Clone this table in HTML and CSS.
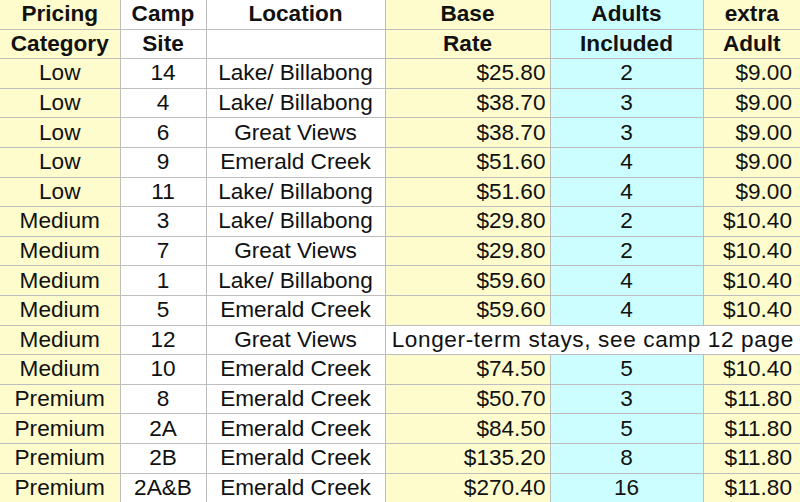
FILE: index.html
```html
<!DOCTYPE html>
<html>
<head>
<meta charset="utf-8">
<link rel="stylesheet" href="styles.css">
</head>
<body>
<table class="rates">
  <colgroup>
    <col class="c-cat"><col class="c-site"><col class="c-loc"><col class="c-base"><col class="c-adults"><col class="c-extra">
  </colgroup>
  <thead>
    <tr>
      <th class="y">Pricing</th><th class="w">Camp</th><th class="w">Location</th><th class="y">Base</th><th class="b">Adults</th><th class="y">extra</th>
    </tr>
    <tr>
      <th class="y">Category</th><th class="w">Site</th><th class="w"></th><th class="y">Rate</th><th class="b">Included</th><th class="y">Adult</th>
    </tr>
  </thead>
  <tbody>
    <tr><td class="y">Low</td><td class="w">14</td><td class="w">Lake/ Billabong</td><td class="y r">$25.80</td><td class="b">2</td><td class="y r2">$9.00</td></tr>
    <tr><td class="y">Low</td><td class="w">4</td><td class="w">Lake/ Billabong</td><td class="y r">$38.70</td><td class="b">3</td><td class="y r2">$9.00</td></tr>
    <tr><td class="y">Low</td><td class="w">6</td><td class="w">Great Views</td><td class="y r">$38.70</td><td class="b">3</td><td class="y r2">$9.00</td></tr>
    <tr><td class="y">Low</td><td class="w">9</td><td class="w">Emerald Creek</td><td class="y r">$51.60</td><td class="b">4</td><td class="y r2">$9.00</td></tr>
    <tr><td class="y">Low</td><td class="w">11</td><td class="w">Lake/ Billabong</td><td class="y r">$51.60</td><td class="b">4</td><td class="y r2">$9.00</td></tr>
    <tr><td class="y">Medium</td><td class="w">3</td><td class="w">Lake/ Billabong</td><td class="y r">$29.80</td><td class="b">2</td><td class="y r2">$10.40</td></tr>
    <tr><td class="y">Medium</td><td class="w">7</td><td class="w">Great Views</td><td class="y r">$29.80</td><td class="b">2</td><td class="y r2">$10.40</td></tr>
    <tr><td class="y">Medium</td><td class="w">1</td><td class="w">Lake/ Billabong</td><td class="y r">$59.60</td><td class="b">4</td><td class="y r2">$10.40</td></tr>
    <tr><td class="y">Medium</td><td class="w">5</td><td class="w">Emerald Creek</td><td class="y r">$59.60</td><td class="b">4</td><td class="y r2">$10.40</td></tr>
    <tr><td class="y">Medium</td><td class="w">12</td><td class="w">Great Views</td><td class="w note" colspan="3">Longer-term stays, see camp 12 page</td></tr>
    <tr><td class="y">Medium</td><td class="w">10</td><td class="w">Emerald Creek</td><td class="y r">$74.50</td><td class="b">5</td><td class="y r2">$10.40</td></tr>
    <tr><td class="y">Premium</td><td class="w">8</td><td class="w">Emerald Creek</td><td class="y r">$50.70</td><td class="b">3</td><td class="y r2">$11.80</td></tr>
    <tr><td class="y">Premium</td><td class="w">2A</td><td class="w">Emerald Creek</td><td class="y r">$84.50</td><td class="b">5</td><td class="y r2">$11.80</td></tr>
    <tr><td class="y">Premium</td><td class="w">2B</td><td class="w">Emerald Creek</td><td class="y r">$135.20</td><td class="b">8</td><td class="y r2">$11.80</td></tr>
    <tr><td class="y">Premium</td><td class="w">2A&amp;B</td><td class="w">Emerald Creek</td><td class="y r">$270.40</td><td class="b">16</td><td class="y r2">$11.80</td></tr>
  </tbody>
</table>
</body>
</html>
```
FILE: styles.css
```css
html, body {
  margin: 0;
  padding: 0;
  background: #ffffff;
}
.rates {
  width: 800px;
  table-layout: fixed;
  border-collapse: collapse;
  font-family: "Liberation Sans", Arial, sans-serif;
  font-size: 22.6px;
  color: #111111;
}
.c-cat { width: 120px; }
.c-site { width: 86px; }
.c-loc { width: 179px; }
.c-base { width: 165px; }
.c-adults { width: 153px; }
.c-extra { width: 97px; }
.rates th, .rates td {
  height: 28.6px;
  padding: 0;
  text-align: center;
  vertical-align: middle;
  white-space: nowrap;
  overflow: visible;
  border: 1px solid #bdbdbd;
  line-height: 24px;
}
.rates th { font-weight: bold; }
.rates tr:first-child th { border-top: none; }
.rates tr > :first-child { border-left: none; }
.rates tr > :last-child { border-right: none; }
.rates tbody tr:last-child td { border-bottom: none; }
.y { background: #fefccc; }
.b { background: #ccfeff; }
.w { background: #ffffff; }
.rates td.r { text-align: right; padding-right: 4px; }
.rates td.r2 { text-align: right; padding-right: 8px; }
.rates td.note { letter-spacing: 0.62px; }
```
